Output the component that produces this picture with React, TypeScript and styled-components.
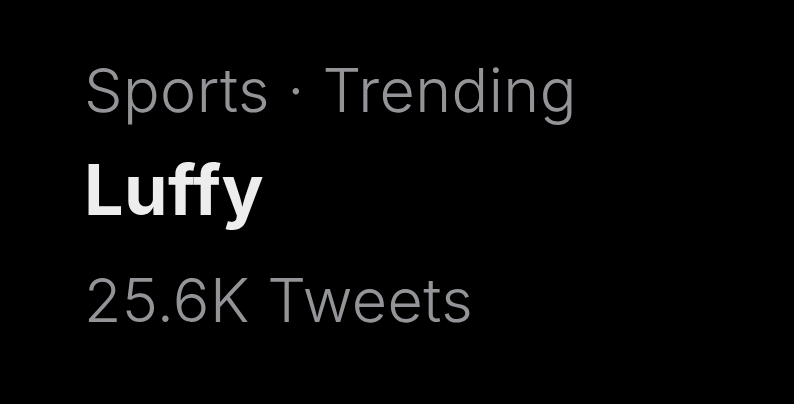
import React from "react"
import styled, { createGlobalStyle } from "styled-components"

const GlobalStyle = createGlobalStyle`
   html, body {
      margin: 0;
      padding: 0;
      background: #000;
   }
`

function App() {
   return (
      <>
         <GlobalStyle />
         <Card>
            <Meta>Sports · Trending</Meta>
            <Topic>Luffy</Topic>
            <Meta>25.6K Tweets</Meta>
         </Card>
      </>
   )
}

const Card = styled.div`
   width: 794px;
   height: 404px;
   box-sizing: border-box;
   padding: 38px 0 0 84px;
   background: #000;
   display: flex;
   flex-direction: column;
   font-family: Inter, "Noto Sans", sans-serif;
`

const Meta = styled.div`
   font-size: 61px;
   font-weight: 300;
   letter-spacing: 0.4px;
   line-height: 104px;
   height: 104px;
   color: #929497;
   display: flex;
   align-items: center;
`

const Topic = styled.div`
   font-size: 70px;
   font-weight: 700;
   letter-spacing: 0.4px;
   line-height: 96px;
   height: 96px;
   margin-bottom: 10px;
   color: #ededed;
   display: flex;
   align-items: center;
`

export default App
